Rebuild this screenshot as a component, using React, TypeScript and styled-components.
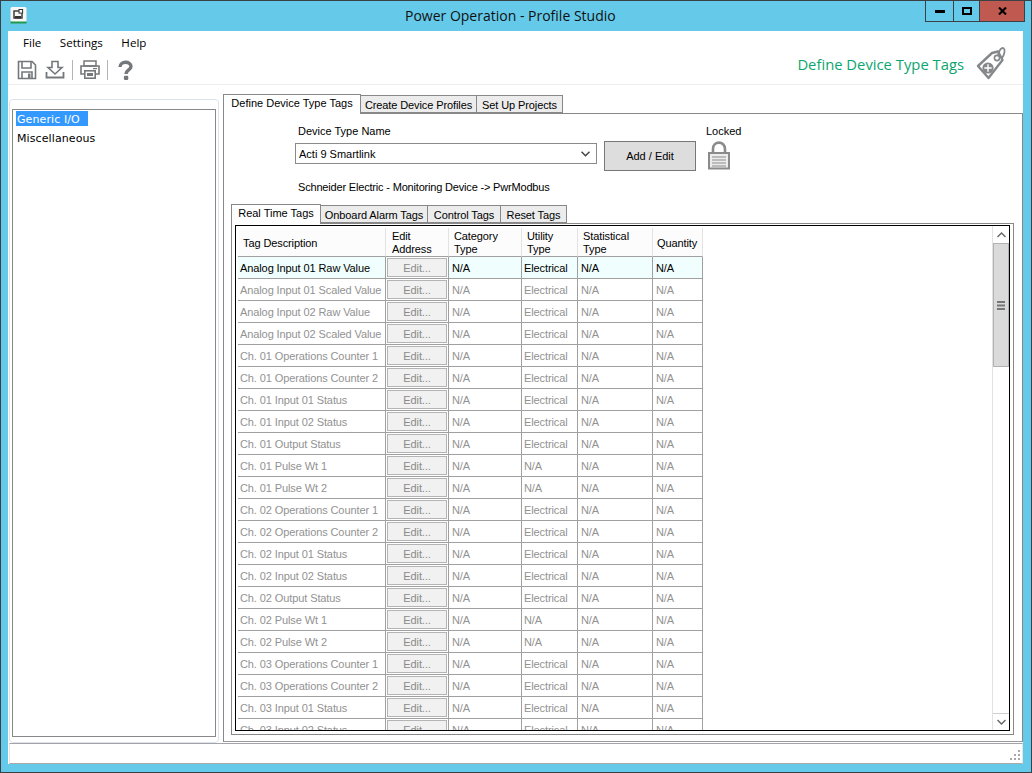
import * as React from 'react';
import { createGlobalStyle, styled } from 'styled-components';

const GlobalStyle = createGlobalStyle`
  html, body {
    margin: 0;
    padding: 0;
    background: #65c9ea;
  }
  * {
    box-sizing: border-box;
  }
`;

const uiFont = `'Open Sans', 'Liberation Sans', sans-serif`;
const gridFont = `'Liberation Sans', Arial, sans-serif`;

const Window = styled.div`
  width: 1032px;
  height: 773px;
  display: flex;
  flex-direction: column;
  background: #65c9ea;
  border: 1px solid #3b4045;
  overflow: hidden;
  font-family: ${gridFont};
  font-size: 11px;
  color: #000;
`;

const TitleBar = styled.header`
  height: 30px;
  flex: none;
  display: flex;
  align-items: flex-start;
  padding-left: 9px;
`;

const AppIcon = styled.svg`
  width: 17px;
  height: 17px;
  margin-top: 6px;
`;

const TitleText = styled.div`
  margin-left: 378px;
  margin-top: 5px;
  font-family: ${uiFont};
  font-size: 14px;
  line-height: 20px;
  color: #111;
  white-space: nowrap;
`;

const WindowButtons = styled.div`
  margin-left: auto;
  margin-right: 6px;
  display: flex;
  height: 21px;
  border: 1px solid #3b4045;
  border-top: none;
`;

const WindowButton = styled.div<{ $w: number; $close?: boolean }>`
  width: ${(p) => p.$w}px;
  display: flex;
  align-items: center;
  justify-content: center;
  background: ${(p) => (p.$close ? '#c0594f' : 'transparent')};
  & + & {
    border-left: 1px solid #3b4045;
  }
`;

const Client = styled.div`
  margin: 0 8px 0 7px;
  height: 733px;
  flex: none;
  background: #fff;
  display: flex;
  flex-direction: column;
`;

const Header = styled.div`
  height: 54px;
  flex: none;
  display: flex;
  justify-content: space-between;
  border-bottom: 1px solid #eeeeee;
`;

const HeaderLeft = styled.div`
  display: flex;
  flex-direction: column;
`;

const MenuBar = styled.nav`
  display: flex;
  padding: 3px 0 0 15px;
  gap: 18.5px;
  height: 28px;
  font-family: ${uiFont};
  font-size: 11.6px;
  line-height: 17px;
`;

const Toolbar = styled.div`
  display: flex;
  align-items: center;
  padding-left: 9px;
  height: 22px;
`;

const ToolIcon = styled.svg`
  width: 20px;
  height: 20px;
  color: #75787b;
  margin-right: 8px;
`;

const ToolSeparator = styled.div`
  width: 1px;
  height: 20px;
  background: #b5b5b5;
  margin-right: 7px;
  margin-left: -1px;
`;

const HeaderRight = styled.div`
  display: flex;
  align-items: flex-start;
  padding: 15px 17px 0 0;
  gap: 12px;
`;

const HeaderTitle = styled.div`
  font-family: ${uiFont};
  font-size: 14.8px;
  line-height: 20px;
  margin-top: 8px;
  color: #0ba56f;
  white-space: nowrap;
`;

const Body = styled.div`
  flex: 1;
  min-height: 0;
  display: flex;
`;

const SideGroup = styled.div`
  width: 210px;
  margin: 14px 0 0 1px;
  height: 644px;
  padding: 9px 2px 5px 2px;
  border: 1px solid #dbe4ec;
  border-radius: 4px;
  flex: none;
`;

const SideList = styled.div`
  height: 100%;
  border: 1px solid #888;
  padding: 1px 3px;
  font-family: 'DejaVu Sans', sans-serif;
  font-size: 11px;
  letter-spacing: 0.1px;
`;

const SideItem = styled.div<{ $selected?: boolean }>`
  height: 15px;
  line-height: 17px;
  margin-bottom: 4px;
  padding-left: 1px;
  width: 72px;
  white-space: nowrap;
  background: ${(p) => (p.$selected ? '#3399ff' : 'transparent')};
  color: ${(p) => (p.$selected ? '#fff' : '#000')};
`;

const Main = styled.div`
  margin: 9px 0 0 4px;
  flex: 1;
  min-width: 0;
  display: flex;
  flex-direction: column;
`;

const TabStrip = styled.div`
  display: flex;
  align-items: flex-end;
  position: relative;
  z-index: 1;
  height: 19px;
  flex: none;
`;

const Tab = styled.div<{ $active?: boolean; $w: number }>`
  width: ${(p) => p.$w}px;
  height: ${(p) => (p.$active ? 20 : 18)}px;
  line-height: ${(p) => (p.$active ? 16 : 18)}px;
  text-align: center;
  letter-spacing: ${(p) => (p.$active ? 0 : -0.1)}px;
  white-space: nowrap;
  background: ${(p) => (p.$active ? '#fff' : '#ececec')};
  border: 1px solid #888;
  border-bottom: ${(p) => (p.$active ? 'none' : '1px solid #888')};
  margin-right: -1px;
  position: relative;
  z-index: ${(p) => (p.$active ? 2 : 1)};
  margin-bottom: ${(p) => (p.$active ? -1 : 0)}px;
`;

const TabPage = styled.div`
  flex: 1;
  min-height: 0;
  border: 1px solid #888;
  border-bottom-color: #9a9a9a;
  display: flex;
  flex-direction: column;
`;

const DeviceForm = styled.div`
  height: 90px;
  flex: none;
  padding: 10px 0 0 74px;
  display: flex;
  flex-direction: column;
`;

const FormRow = styled.div`
  display: flex;
  align-items: flex-start;
`;

const FieldColumn = styled.div`
  width: 299px;
  display: flex;
  flex-direction: column;
`;

const FieldLabel = styled.div`
  line-height: 14px;
  margin-bottom: 5px;
`;

const SelectBox = styled.div`
  width: 302px;
  height: 21px;
  margin-left: -3px;
  border: 1px solid #8a8a8a;
  display: flex;
  align-items: center;
  justify-content: space-between;
  padding: 0 6px 0 3px;
`;

const AddButton = styled.div`
  width: 92px;
  height: 30px;
  margin: 17px 0 0 7px;
  border: 1px solid #777;
  background: #dddddd;
  display: flex;
  align-items: center;
  justify-content: center;
`;

const LockColumn = styled.div`
  margin-left: 10px;
  display: flex;
  flex-direction: column;
  align-items: flex-start;
`;

const LockLabel = styled.span`
  line-height: 14px;
  margin-bottom: 3px;
`;

const LockGlyph = styled.svg`
  margin-left: 2px;
`;

const VendorLine = styled.div`
  margin-top: 9px;
  line-height: 14px;
  letter-spacing: -0.18px;
`;

const InnerArea = styled.div`
  flex: 1;
  min-height: 0;
  padding: 0 8px 6px 7px;
  display: flex;
  flex-direction: column;
`;

const GridPage = styled.div`
  flex: 1;
  min-height: 0;
  border: 1px solid #888;
  padding: 1px 3px 3px 3px;
  display: flex;
`;

const GridFrame = styled.div`
  flex: 1;
  min-width: 0;
  border: 1px solid #000;
  display: flex;
  overflow: hidden;
`;

const GridScroll = styled.div`
  flex: 1;
  min-width: 0;
  overflow: hidden;
  padding: 2px 0 0 2px;
`;

const GridTable = styled.div`
  display: grid;
  grid-template-columns: 148px 63px 73px 56px 75px 50px;
  width: 465px;
  line-height: 13px;
  letter-spacing: -0.1px;
`;

const HeadCell = styled.div<{ $pad?: number }>`
  height: 29px;
  background: #fcfcfc;
  border-right: 1px solid #e3e3e3;
  border-bottom: 1px solid #a0a0a0;
  padding-left: ${(p) => p.$pad ?? 5}px;
  padding-top: 2px;
  display: flex;
  align-items: center;
`;

const Cell = styled.div<{ $active?: boolean; $pad?: number }>`
  height: 22px;
  border-right: 1px solid #a0a0a0;
  border-bottom: 1px solid #a0a0a0;
  padding-left: ${(p) => p.$pad ?? 3}px;
  padding-top: 2px;
  display: flex;
  align-items: center;
  white-space: nowrap;
  background: ${(p) => (p.$active ? '#f0fffe' : '#fff')};
  color: ${(p) => (p.$active ? '#000' : '#929292')};
`;

const EditCell = styled(Cell)`
  padding: 0 1px;
`;

const EditButton = styled.div`
  flex: 1;
  height: 19px;
  padding-top: 1px;
  border: 1px solid #b4b4b4;
  background: #f1f1f1;
  color: #8a8a8a;
  display: flex;
  align-items: center;
  justify-content: center;
`;

const ScrollBar = styled.div`
  width: 17px;
  flex: none;
  display: flex;
  flex-direction: column;
  padding-top: 1px;
  border-left: 1px solid #e2e2e2;
  background: #fff;
`;

const ScrollArrow = styled.div`
  height: 16px;
  display: flex;
  align-items: center;
  justify-content: center;
  flex: none;
`;

const ScrollThumb = styled.div`
  height: 124px;
  flex: none;
  background: #dadada;
  border: 1px solid #b2b2b2;
  display: flex;
  align-items: center;
  justify-content: center;
`;

const ScrollTrack = styled.div`
  flex: 1;
  border-bottom: 1px solid #cfcfcf;
`;

const StatusBar = styled.div`
  height: 21px;
  flex: none;
  margin: 1px 0 0 1px;
  border-top: 1px solid #a3a3a9;
  border-bottom: 1px solid #a9a9a9;
  border-left: 1px solid #e5e5e5;
  border-right: 1px solid #e5e5e5;
  display: flex;
  justify-content: flex-end;
  align-items: flex-end;
`;

const Grip = styled.svg`
  width: 12px;
  height: 12px;
  margin: 0 1px 1px 0;
`;

interface TagRow {
  name: string;
  utility?: string;
}

const rows: TagRow[] = [
  { name: 'Analog Input 01 Raw Value' },
  { name: 'Analog Input 01 Scaled Value' },
  { name: 'Analog Input 02 Raw Value' },
  { name: 'Analog Input 02 Scaled Value' },
  { name: 'Ch. 01  Operations Counter 1' },
  { name: 'Ch. 01  Operations Counter 2' },
  { name: 'Ch. 01 Input 01 Status' },
  { name: 'Ch. 01 Input 02 Status' },
  { name: 'Ch. 01 Output Status' },
  { name: 'Ch. 01 Pulse Wt 1', utility: 'N/A' },
  { name: 'Ch. 01 Pulse Wt 2', utility: 'N/A' },
  { name: 'Ch. 02  Operations Counter 1' },
  { name: 'Ch. 02  Operations Counter 2' },
  { name: 'Ch. 02 Input 01 Status' },
  { name: 'Ch. 02 Input 02 Status' },
  { name: 'Ch. 02 Output Status' },
  { name: 'Ch. 02 Pulse Wt 1', utility: 'N/A' },
  { name: 'Ch. 02 Pulse Wt 2', utility: 'N/A' },
  { name: 'Ch. 03  Operations Counter 1' },
  { name: 'Ch. 03  Operations Counter 2' },
  { name: 'Ch. 03 Input 01 Status' },
  { name: 'Ch. 03 Input 02 Status' },
];

const TagIcon = () => (
  <svg width="30" height="34" viewBox="0 0 30 34" fill="none">
    <path
      d="M2 20 L16 7 L22 5.5 L26.5 14 L12.5 32 Z"
      stroke="#85888a"
      strokeWidth="2.4"
      strokeLinejoin="round"
    />
    <circle cx="21" cy="12" r="2.6" stroke="#85888a" strokeWidth="1.6" />
    <path d="M22 9.5 C23 3.5 26 1 27.8 2.4 C29.4 3.8 28.4 9 26 12" stroke="#85888a" strokeWidth="1.8" />
    <circle cx="12" cy="22" r="5.6" fill="#85888a" />
    <path d="M12 18.3 V25.7 M8.3 22 H15.7" stroke="#fff" strokeWidth="1.4" />
  </svg>
);

const LockIcon = () => (
  <LockGlyph width="22" height="29" viewBox="0 0 22 29" fill="none">
    <path d="M5 13 V8 C5 -0.5 17 -0.5 17 8 V13" stroke="#8b8b8b" strokeWidth="2.6" />
    <rect x="1" y="12" width="20" height="15.5" fill="#ececec" stroke="#8b8b8b" strokeWidth="2" />
    <path d="M4 16 H18 M4 19 H18 M4 22 H18 M4 25 H18" stroke="#8b8b8b" strokeWidth="1" />
  </LockGlyph>
);

const App: React.FC = () => {
  return (
    <Window>
      <GlobalStyle />
      <TitleBar>
        <AppIcon viewBox="0 0 17 17">
          <rect x="0.5" y="0" width="16" height="15" rx="1.5" fill="#f7f7f5" />
          <rect x="0.5" y="14.5" width="16" height="2" fill="#1f9a4d" />
          <rect x="4" y="4" width="8" height="7" fill="none" stroke="#333" strokeWidth="1.4" />
          <rect x="9" y="2.5" width="3.6" height="3.6" fill="#f7f7f5" stroke="#333" />
          <rect x="5" y="9" width="6" height="2.5" fill="#333" />
        </AppIcon>
        <TitleText>Power Operation - Profile Studio</TitleText>
        <WindowButtons>
          <WindowButton $w={27}>
            <svg width="10" height="4"><rect width="10" height="3" y="1" fill="#000" /></svg>
          </WindowButton>
          <WindowButton $w={26}>
            <svg width="10" height="8" viewBox="0 0 10 8" fill="none">
              <rect x="1" y="1" width="8" height="6" stroke="#000" strokeWidth="2" />
            </svg>
          </WindowButton>
          <WindowButton $w={45} $close>
            <svg width="9" height="8" viewBox="0 0 9 8" fill="none">
              <path d="M1 0.5 L8 7.5 M8 0.5 L1 7.5" stroke="#000" strokeWidth="2.1" />
            </svg>
          </WindowButton>
        </WindowButtons>
      </TitleBar>
      <Client>
        <Header>
          <HeaderLeft>
            <MenuBar>
              <span>File</span>
              <span>Settings</span>
              <span>Help</span>
            </MenuBar>
            <Toolbar>
              <ToolIcon viewBox="0 0 20 20" fill="none">
                <path d="M1.5 1.5 H15 L18.5 5 V18.5 H1.5 Z" stroke="currentColor" strokeWidth="1.6" />
                <path d="M5 2 V8 H14 V2" stroke="currentColor" strokeWidth="1.6" />
                <path d="M5 18 V12 H15 V18" stroke="currentColor" strokeWidth="1.6" />
                <rect x="11" y="13.5" width="2.5" height="4.5" fill="currentColor" />
              </ToolIcon>
              <ToolIcon viewBox="0 0 20 20" fill="none">
                <path d="M7 1.5 H13 V7.5 H17 L10 14 L3 7.5 H7 Z" stroke="currentColor" strokeWidth="1.6" />
                <path d="M1.5 12 V17.5 H18.5 V12" stroke="currentColor" strokeWidth="1.8" />
              </ToolIcon>
              <ToolSeparator />
              <ToolIcon viewBox="0 0 20 20" fill="none">
                <rect x="4" y="1" width="12" height="5" stroke="currentColor" strokeWidth="1.5" />
                <path d="M4 14 H1 V6 H19 V14 H16" stroke="currentColor" strokeWidth="1.6" />
                <rect x="4.8" y="10.8" width="10.4" height="7.4" stroke="currentColor" strokeWidth="1.6" />
                <rect x="7" y="13" width="6" height="3" fill="currentColor" />
                <rect x="13" y="8" width="4" height="1.2" fill="currentColor" />
              </ToolIcon>
              <ToolSeparator />
              <ToolIcon viewBox="0 0 20 20" fill="none">
                <path d="M5 7 C5 0.8 16 0.8 16 6.5 C16 10 11 10 11 14" stroke="currentColor" strokeWidth="3.4" />
                <rect x="8.9" y="15.7" width="4.4" height="4.2" rx="1.2" fill="currentColor" />
              </ToolIcon>
            </Toolbar>
          </HeaderLeft>
          <HeaderRight>
            <HeaderTitle>Define Device Type Tags</HeaderTitle>
            <TagIcon />
          </HeaderRight>
        </Header>
        <Body>
          <SideGroup>
            <SideList>
              <SideItem $selected>Generic I/O</SideItem>
              <SideItem>Miscellaneous</SideItem>
            </SideList>
          </SideGroup>
          <Main>
            <TabStrip>
              <Tab $active $w={138}>Define Device Type Tags</Tab>
              <Tab $w={117}>Create Device Profiles</Tab>
              <Tab $w={87}>Set Up Projects</Tab>
            </TabStrip>
            <TabPage>
              <DeviceForm>
                <FormRow>
                  <FieldColumn>
                    <FieldLabel>Device Type Name</FieldLabel>
                    <SelectBox>
                      <span>Acti 9 Smartlink</span>
                      <svg width="9" height="6" viewBox="0 0 9 6" fill="none">
                        <path d="M0.5 0.8 L4.5 4.8 L8.5 0.8" stroke="#444" strokeWidth="1.5" />
                      </svg>
                    </SelectBox>
                  </FieldColumn>
                  <AddButton>Add / Edit</AddButton>
                  <LockColumn>
                    <LockLabel>Locked</LockLabel>
                    <LockIcon />
                  </LockColumn>
                </FormRow>
                <VendorLine>Schneider Electric - Monitoring Device -&gt; PwrModbus</VendorLine>
              </DeviceForm>
              <InnerArea>
                <TabStrip>
                  <Tab $active $w={90}>Real Time Tags</Tab>
                  <Tab $w={108}>Onboard Alarm Tags</Tab>
                  <Tab $w={74}>Control Tags</Tab>
                  <Tab $w={67}>Reset Tags</Tab>
                </TabStrip>
                <GridPage>
                  <GridFrame>
                    <GridScroll>
                      <GridTable>
                        <HeadCell>Tag Description</HeadCell>
                        <HeadCell $pad={6}>Edit<br />Address</HeadCell>
                        <HeadCell>Category<br />Type</HeadCell>
                        <HeadCell>Utility<br />Type</HeadCell>
                        <HeadCell>Statistical<br />Type</HeadCell>
                        <HeadCell $pad={4}>Quantity</HeadCell>
                        {rows.map((row, i) => (
                          <React.Fragment key={row.name}>
                            <Cell $active={i === 0} $pad={2}>{row.name}</Cell>
                            <EditCell $active={false}>
                              <EditButton>Edit...</EditButton>
                            </EditCell>
                            <Cell $active={i === 0}>N/A</Cell>
                            <Cell $active={i === 0} $pad={2}>{row.utility ?? 'Electrical'}</Cell>
                            <Cell $active={i === 0}>N/A</Cell>
                            <Cell $active={i === 0}>N/A</Cell>
                          </React.Fragment>
                        ))}
                      </GridTable>
                    </GridScroll>
                    <ScrollBar>
                      <ScrollArrow>
                        <svg width="9" height="6" viewBox="0 0 9 6" fill="none">
                          <path d="M0.5 5 L4.5 1 L8.5 5" stroke="#666" strokeWidth="1.4" />
                        </svg>
                      </ScrollArrow>
                      <ScrollThumb>
                        <svg width="8" height="9" viewBox="0 0 8 9">
                          <path d="M0 0 H8 V2 H0 Z M0 3.5 H8 V5.5 H0 Z M0 7 H8 V9 H0 Z" fill="#777" />
                        </svg>
                      </ScrollThumb>
                      <ScrollTrack />
                      <ScrollArrow>
                        <svg width="9" height="6" viewBox="0 0 9 6" fill="none">
                          <path d="M0.5 1 L4.5 5 L8.5 1" stroke="#666" strokeWidth="1.4" />
                        </svg>
                      </ScrollArrow>
                    </ScrollBar>
                  </GridFrame>
                </GridPage>
              </InnerArea>
            </TabPage>
          </Main>
        </Body>
        <StatusBar>
          <Grip viewBox="0 0 12 12">
            <path d="M9 0h2v2H9z M5 4h2v2H5z M9 4h2v2H9z M1 8h2v2H1z M5 8h2v2H5z M9 8h2v2H9z" fill="#a8a8a8" />
          </Grip>
        </StatusBar>
      </Client>
    </Window>
  );
};

export default App;
